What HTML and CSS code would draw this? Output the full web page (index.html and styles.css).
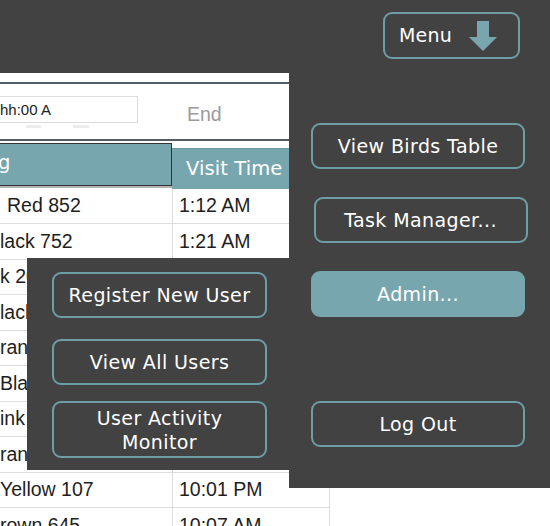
FILE: index.html
```html
<!DOCTYPE html>
<html lang="en">
<head>
<meta charset="utf-8">
<title>Bird Visits</title>
<link rel="stylesheet" href="styles.css">
</head>
<body>
<header class="topbar">
  <button class="menu-btn" type="button">
    <span>Menu</span>
    <svg class="menu-arrow" width="28" height="30" viewBox="0 0 28 30" aria-hidden="true">
      <polygon points="8,0 20,0 20,16 28,16 14,30 0,16 8,16" fill="#79a6ae"/>
    </svg>
  </button>
</header>

<main class="content">
  <div class="filters">
    <div class="date-field">
      <div class="date-input">hh:00 A</div>
      <div class="ticks"><span class="tick tick-a"></span><span class="tick tick-b"></span></div>
    </div>
    <span class="end-label">End</span>
  </div>

  <div class="grid">
    <div class="thead">
      <div class="th th-sorted">g</div>
      <div class="th th-time">Visit Time</div>
    </div>
    <div class="row"><div class="cell cell-lead">Red 852</div><div class="cell cell-time">1:12 AM</div></div>
    <div class="row"><div class="cell">lack 752</div><div class="cell cell-time">1:21 AM</div></div>
    <div class="row"><div class="cell">k 209</div><div class="cell cell-time">2:04 AM</div></div>
    <div class="row"><div class="cell">lack 311</div><div class="cell cell-time">3:15 AM</div></div>
    <div class="row"><div class="cell">range 48</div><div class="cell cell-time">4:40 AM</div></div>
    <div class="row"><div class="cell">Black 563</div><div class="cell cell-time">6:02 AM</div></div>
    <div class="row"><div class="cell">ink 930</div><div class="cell cell-time">7:26 AM</div></div>
    <div class="row"><div class="cell">range 274</div><div class="cell cell-time">9:18 AM</div></div>
    <div class="row"><div class="cell">Yellow 107</div><div class="cell cell-time">10:01 PM</div></div>
    <div class="row"><div class="cell">rown 645</div><div class="cell cell-time">10:07 AM</div></div>
  </div>
</main>

<nav class="dropdown">
  <button class="nav-btn" type="button">View Birds Table</button>
  <button class="nav-btn nav-btn-nudge" type="button">Task Manager...</button>
  <button class="nav-btn nav-btn-active" type="button">Admin...</button>
  <button class="nav-btn nav-btn-bottom" type="button">Log Out</button>
</nav>

<div class="submenu">
  <button class="nav-btn sub-btn" type="button">Register New User</button>
  <button class="nav-btn sub-btn sub-gap-lg" type="button">View All Users</button>
  <button class="nav-btn sub-btn sub-btn-tall sub-gap-sm" type="button">User Activity<br>Monitor</button>
</div>
</body>
</html>
```

FILE: styles.css
```css
html, body {
  margin: 0;
  height: 100%;
  overflow: hidden;
}

body {
  position: relative;
  background: #ffffff;
  font-family: "Liberation Sans", Arial, sans-serif;
}

.topbar {
  height: 73px;
  box-sizing: border-box;
  background: #424242;
  display: flex;
  justify-content: flex-end;
  align-items: flex-start;
  padding: 12px 30px 0 0;
}

.menu-btn {
  width: 137px;
  height: 47px;
  box-sizing: border-box;
  border: 2px solid #6d9ea6;
  border-radius: 9px;
  background: transparent;
  color: #ffffff;
  font: 19px "DejaVu Sans", Verdana, sans-serif;
  letter-spacing: 0.2px;
  display: flex;
  align-items: center;
  gap: 17px;
  padding: 0 0 1px 14px;
}

.menu-arrow {
  display: block;
  margin-top: 2px;
}

.content {
  padding-top: 9px;
}

.filters {
  height: 59px;
  box-sizing: border-box;
  border-top: 2px solid #555c69;
  border-bottom: 2px solid #555c69;
  display: flex;
  align-items: flex-start;
}

.date-field {
  width: 138px;
  margin-top: 12px;
}

.date-input {
  height: 27px;
  box-sizing: border-box;
  border: 1px solid #dcdcdc;
  border-left: none;
  font-size: 15px;
  line-height: 25px;
  color: #222222;
}

.ticks {
  display: flex;
  height: 3px;
  margin-top: 2px;
}

.tick {
  display: block;
  background: #ececec;
}

.tick-a {
  width: 15px;
  margin-left: 26px;
}

.tick-b {
  width: 16px;
  margin-left: 32px;
}

.end-label {
  margin: 19px 0 0 49px;
  font-size: 19.5px;
  line-height: 22px;
  color: #9a9a9a;
}

.grid {
  width: 329px;
  margin-top: 2px;
  border-right: 1px solid #dddddd;
}

.thead {
  display: flex;
  align-items: flex-end;
  height: 45.5px;
}

.th {
  background: #78a6ae;
  color: #ffffff;
  font: 19.5px "DejaVu Sans", Verdana, sans-serif;
  display: flex;
  align-items: center;
  box-sizing: border-box;
  white-space: nowrap;
  overflow: hidden;
}

.th-sorted {
  align-self: flex-start;
  width: 172px;
  height: 43px;
  border: 1px solid #333333;
  border-left: none;
  box-shadow: 0 2px 0 #b3b3b3;
  text-indent: -2px;
  padding-bottom: 4px;
}

.th-time {
  flex: 1;
  height: 40.5px;
  border-top: 1px solid #6b99a1;
  padding-left: 14px;
  letter-spacing: 0.1px;
}

.row {
  display: grid;
  grid-template-columns: 172px 1fr;
  height: 35.5px;
  box-sizing: border-box;
  border-bottom: 1px solid #dddddd;
}

.cell {
  display: flex;
  align-items: center;
  font-size: 19.5px;
  color: #1e1e1e;
  white-space: nowrap;
  overflow: hidden;
}

.cell-lead {
  padding-left: 7px;
}

.cell-time {
  border-left: 1px solid #dddddd;
  padding-left: 6px;
}

.dropdown {
  position: absolute;
  left: 289px;
  top: 73px;
  right: 0;
  height: 415px;
  box-sizing: border-box;
  background: #424242;
  display: flex;
  flex-direction: column;
  align-items: flex-start;
  gap: 28px;
  padding: 50px 0 41px 22px;
}

.nav-btn {
  width: 214px;
  height: 46px;
  box-sizing: border-box;
  border: 2px solid #6d9ea6;
  border-radius: 9px;
  background: transparent;
  color: #ffffff;
  font: 19px "DejaVu Sans", Verdana, sans-serif;
  letter-spacing: 0.4px;
  padding: 0;
}

.nav-btn-nudge {
  margin-left: 2.5px;
}

.nav-btn-active {
  background: #78a6ae;
  border-color: #78a6ae;
}

.nav-btn-bottom {
  margin-top: auto;
}

.submenu {
  position: absolute;
  left: 27px;
  top: 258px;
  width: 262px;
  height: 212px;
  box-sizing: border-box;
  background: #424242;
  display: flex;
  flex-direction: column;
  align-items: flex-start;
  padding: 14px 0 0 25px;
}

.sub-btn {
  width: 215px;
}

.sub-gap-lg {
  margin-top: 21px;
}

.sub-gap-sm {
  margin-top: 16px;
}

.sub-btn-tall {
  height: 57px;
  line-height: 24px;
}
```
